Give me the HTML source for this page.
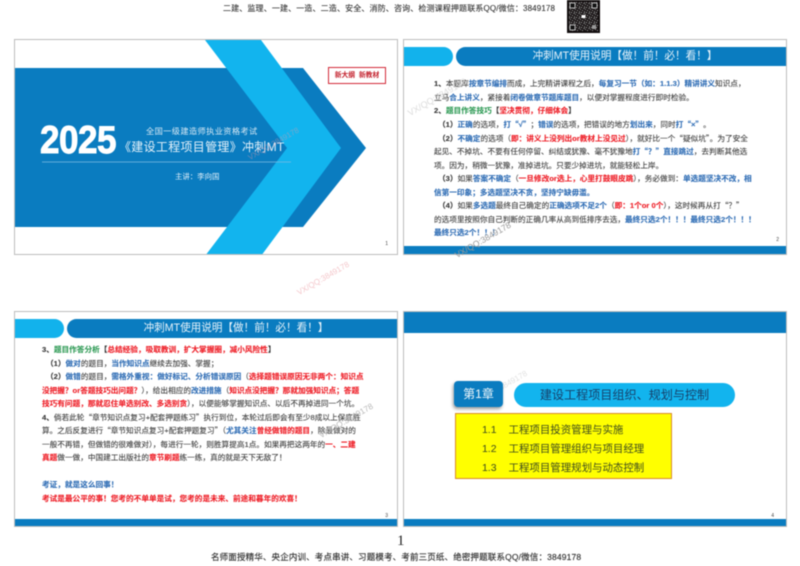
<!DOCTYPE html>
<html lang="zh"><head><meta charset="utf-8">
<style>
html,body{margin:0;padding:0;background:#fff}
body{width:800px;height:566px;position:relative;overflow:hidden;font-family:"Liberation Sans","Noto Sans CJK SC",sans-serif;color:#444}
#w{position:absolute;left:0;top:0;width:800px;height:566px;filter:blur(.4px)}
.a{position:absolute;white-space:nowrap}
.s{position:absolute;width:382px;height:215px;background:#fff;box-sizing:border-box;border:1px solid #bdbdbd;overflow:hidden}
.l{position:absolute;white-space:nowrap;font-size:7.65px;line-height:10px;color:#3c3c3c;-webkit-text-stroke:.1px currentColor}
.b{color:#2f6db5;font-weight:bold}.r{color:#ee1c25;font-weight:bold}.g{color:#2e9a55;font-weight:bold}.k{font-weight:bold;color:#333}
.q{font-family:"Noto Sans CJK SC",sans-serif}
.wm{position:absolute;white-space:nowrap;font-size:9px;transform:rotate(-30deg);transform-origin:left bottom}
.hd1{position:absolute;left:0;width:49px;height:19px;background:#12b2ec;border-radius:0 10px 10px 0}
.hd2{position:absolute;left:52px;right:0;height:19px;background:#0a7cc0;border-radius:10px 0 0 10px;color:#e8f3fa;font-size:10.6px;line-height:19px;text-align:center;padding-left:8px;box-sizing:border-box}
.n{position:absolute;font-size:5px;color:#444;right:7px}
</style></head><body><div id="w">

<div class="a" style="left:223px;top:3px;font-size:8px;line-height:11px;color:#333;letter-spacing:.14px;-webkit-text-stroke:.1px #333">二建、监理、一建、一造、二造、安全、消防、咨询、检测课程押题联系QQ/微信：3849178</div>

<svg class="a" style="left:567px;top:0" width="33" height="33" viewBox="0 0 33 33">
<defs><pattern id="p" width="5" height="5" patternUnits="userSpaceOnUse"><rect width="5" height="5" fill="#1a1516"/><rect x="0" y="0" width="1" height="1" fill="#999"/><rect x="2" y="1" width="1" height="2" fill="#777"/><rect x="4" y="2" width="1" height="1" fill="#a9a9a9"/><rect x="1" y="3" width="2" height="1" fill="#666"/><rect x="3" y="4" width="1" height="1" fill="#888"/></pattern></defs>
<rect width="33" height="33" fill="#120d0e"/><rect x="2" y="2" width="29" height="29" fill="url(#p)"/>
<g fill="#111" stroke="#bbb" stroke-width="1"><rect x="3" y="3" width="5" height="5"/><rect x="25" y="3" width="5" height="5"/><rect x="3" y="25" width="5" height="5"/></g>
<rect x="25" y="25" width="4" height="4" fill="#999"/><rect x="14.5" y="15" width="4" height="3" fill="#fff"/>
</svg>

<!-- Slide 1 -->
<div class="s" style="left:14px;top:39px;width:384px;height:216px">
<svg class="a" style="left:0;top:0" width="384" height="216" viewBox="0 0 384 216">
<polygon points="0,28 288,28 351,108 288,187 0,187" fill="#0a7cc0"/>
<polygon points="190,0 246,0 326,108 246,216 190,216 272,108" fill="#12b4ee"/>
<line x1="27" y1="122" x2="276" y2="122" stroke="#7fbde2" stroke-width=".7"/>
</svg>
<div class="a" style="left:25px;top:79px;font-family:'Liberation Sans',sans-serif;font-weight:bold;font-size:39px;line-height:44px;color:#fff;letter-spacing:-.6px;transform:scaleX(.9);transform-origin:left;-webkit-text-stroke:.9px #fff">2025</div>
<div class="a" style="left:131px;top:85.5px;font-size:8.2px;line-height:11px;color:#d6e8f4;letter-spacing:.4px">全国一级建造师执业资格考试</div>
<div class="a" style="left:104px;top:99px;font-size:12px;line-height:17px;color:#e4f1fa;letter-spacing:.3px">《建设工程项目管理》冲刺MT</div>
<div class="a" style="left:160px;top:131px;font-size:7.4px;line-height:11px;color:#e4f1fa">主讲：李向国</div>
<div class="a" style="left:313px;top:27px;width:58px;height:17px;box-sizing:border-box;border:1px solid #d22a38;background:#fff;color:#c3202c;font-size:6.8px;font-weight:bold;line-height:15px;text-align:center">新大纲&nbsp;&nbsp;新教材</div>
<div class="n" style="top:201px;right:9px">1</div>
</div>

<!-- Slide 2 -->
<div class="s" style="left:403px;top:39px;width:384px;height:216px">
<div class="hd1" style="top:7px"></div><div class="hd2" style="top:7px">冲刺MT使用说明【做！前！必！看！】</div>
<div class="l" style="left:30px;top:39px"><span class="k">1、</span>本题库<span class="b">按章节编排</span>而成，上完精讲课程之后，<span class="b">每复习一节（如：1.1.3）精讲讲义</span>知识点，</div>
<div class="l" style="left:30px;top:52.5px">立马<span class="b">合上讲义</span>，紧接着<span class="b">闭卷做章节题库题目</span>，以便对掌握程度进行即时检验。</div>
<div class="l" style="left:30px;top:66px"><span class="k">2、</span><span class="g">题目作答技巧</span><span class="k">【</span><span class="r">坚决贯彻，仔细体会</span><span class="k">】</span></div>
<div class="l" style="left:34px;top:80px"><span class="k">（1）</span><span class="b">正确</span>的选项，<span class="b">打<span class="q">“</span>√<span class="q">”</span></span>；<span class="b">错误</span>的选项，把错误的地方<span class="b">划出来</span>，同时<span class="b">打<span class="q">“</span>×<span class="q">”</span></span>。</div>
<div class="l" style="left:34px;top:93.5px"><span class="k">（2）</span><span class="b">不确定</span>的选项（<span class="r">即：讲义上没列出or教材上没见过</span>），就好比一个<span class="q">“</span>疑似坑<span class="q">”</span>。为了安全</div>
<div class="l" style="left:30px;top:107px">起见、不掉坑、不要有任何停留、纠结或犹豫、毫不犹豫地<span class="b">打<span class="q">“</span>？<span class="q">”</span>直接跳过</span>，去判断其他选</div>
<div class="l" style="left:30px;top:120.5px">项。因为，稍微一犹豫，准掉进坑。只要少掉进坑，就能轻松上岸。</div>
<div class="l" style="left:34px;top:134px"><span class="k">（3）</span>如果<span class="b">答案不确定</span>（<span class="r">一旦修改or选上，心里打鼓眼皮跳</span>），务必做到：<span class="b">单选题坚决不改，相</span></div>
<div class="l" style="left:30px;top:147.5px"><span class="b">信第一印象；多选题坚决不贪，坚持宁缺毋滥。</span></div>
<div class="l" style="left:34px;top:161px"><span class="k">（4）</span>如果<span class="b">多选题</span>最终自己确定的<span class="b">正确选项不足2个</span>（<span class="r">即：1个or 0个</span>），这时候再从打<span class="q">“</span>？<span class="q">”</span></div>
<div class="l" style="left:30px;top:174.5px">的选项里按照你自己判断的正确几率从高到低排序去选，<span class="b">最终只选2个！！！最终只选2个！！！</span></div>
<div class="l" style="left:30px;top:188px"><span class="b">最终只选2个！！！</span></div>
<div class="n" style="top:197px;right:7px">2</div>
<div class="a" style="left:0;right:0;bottom:0;height:8px;background:#0a7cc0"></div>
</div>

<!-- Slide 3 -->
<div class="s" style="left:14px;top:311px;width:384px;height:216px">
<div class="hd1" style="top:7px"></div><div class="hd2" style="top:7px">冲刺MT使用说明【做！前！必！看！】</div>
<div class="l" style="left:27px;top:33px"><span class="k">3、</span><span class="g">题目作答分析</span><span class="k">【</span><span class="r">总结经验，吸取教训，扩大掌握圈，减小风险性</span><span class="k">】</span></div>
<div class="l" style="left:31px;top:46.5px"><span class="k">（1）</span><span class="b">做对</span>的题目，<span class="b">当作知识点</span>继续去加强、掌握；</div>
<div class="l" style="left:31px;top:60px"><span class="k">（2）</span><span class="b">做错</span>的题目，<span class="b">需格外重视：做好标记、分析错误原因</span>（<span class="r">选择题错误原因无非两个：知识点</span></div>
<div class="l" style="left:27px;top:73.5px"><span class="r">没把握？or答题技巧出问题？</span>），给出相应的<span class="b">改进措施</span>（<span class="r">知识点没把握？那就加强知识点；答题</span></div>
<div class="l" style="left:27px;top:87px"><span class="r">技巧有问题，那就忍住单选别改、多选别贪</span>），以便能够掌握知识点、以后不再掉进同一个坑。</div>
<div class="l" style="left:27px;top:100.5px"><span class="k">4、</span>倘若此轮<span class="q">“</span>章节知识点复习+配套押题练习<span class="q">”</span>执行到位，本轮过后即会有至少8成以上保底胜</div>
<div class="l" style="left:27px;top:114px">算。之后反复进行<span class="q">“</span>章节知识点复习+配套押题复习<span class="q">”</span>（<span class="b">尤其关注</span><span class="r">曾经做错的题目</span>，除最做对的</div>
<div class="l" style="left:27px;top:127.5px">一般不再错，但做错的很难做对），每进行一轮，则胜算提高1点。如果再把这两年的<span class="r">一、二建</span></div>
<div class="l" style="left:27px;top:141px"><span class="r">真题</span>做一做，中国建工出版社的<span class="r">章节刷题</span>练一练，真的就是天下无敌了！</div>
<div class="l" style="left:27px;top:168px"><span class="b">考证，就是这么回事！</span></div>
<div class="l" style="left:27px;top:181.5px"><span class="r">考试是最公平的事！您考的不单单是试，您考的是未来、前途和暮年的欢喜！</span></div>
<div class="n" style="top:201px;right:9px">3</div>
<div class="a" style="left:0;right:0;bottom:0;height:7px;background:#0a7cc0"></div>
</div>

<!-- Slide 4 -->
<div class="s" style="left:403px;top:311px;width:384px;height:216px">
<div class="a" style="left:0;right:0;top:0;height:21px;background:#0a7cc0"></div>
<div class="wm" style="left:74px;top:85px;color:#e2e2e2;font-size:8px">VX/QQ:3849178</div>
<div class="a" style="left:50px;top:69px;width:49px;height:26px;border-radius:4px;background:#0a7cc0;box-shadow:-1px 2px 3px rgba(0,0,0,.4);color:#f0f7fb;font-size:12px;line-height:26px;text-align:center">第1章</div>
<div class="a" style="left:110px;top:71px;width:221px;height:24px;border-radius:12px;background:#12b4ee;color:#17406a;font-size:12.1px;line-height:24px;text-align:center">建设工程项目组织、规划与控制</div>
<div class="a" style="left:51px;top:101px;width:217px;height:66px;box-sizing:border-box;border:1px solid #d98a2b;background:#ffff00"></div>
<div class="a" style="left:78px;top:109px;font-size:10.45px;line-height:19.1px;color:#3c4a1e">1.1<span style="display:inline-block;width:12px"></span>工程项目投资管理与实施<br>1.2<span style="display:inline-block;width:12px"></span>工程项目管理组织与项目经理<br>1.3<span style="display:inline-block;width:12px"></span>工程项目管理规划与动态控制</div>
<div class="n" style="top:201px;right:12px">4</div>
<div class="a" style="left:0;right:0;bottom:0;height:7px;background:#0a7cc0"></div>
</div>

<!-- Watermarks -->
<div class="wm" style="left:411px;top:108px;color:#dcdcdc">VX/QQ:3849178</div>
<div class="wm" style="left:458px;top:250px;color:#9a9a9a;font-size:8.6px">VX/QQ:3849178</div>
<div class="wm" style="left:251px;top:153px;color:#e59aa8;opacity:.45;font-size:7.8px">VX/QQ:3849178</div>
<div class="wm" style="left:300px;top:288px;color:#f4c7cb;font-size:8px">VX/QQ:3849178</div>
<div class="wm" style="left:322px;top:430px;color:#b8b8b8;font-size:8.3px">VX/QQ:3849178</div>

<div class="a" style="left:397px;top:533px;font-family:'Liberation Serif',serif;font-size:15px;line-height:17px;color:#222">1</div>
<div class="a" style="left:211px;top:552px;font-size:8.5px;line-height:11px;color:#333;letter-spacing:.15px;-webkit-text-stroke:.15px #333">名师面授精华、央企内训、考点串讲、习题模考、考前三页纸、绝密押题联系QQ/微信：3849178</div>
</div></body></html>
